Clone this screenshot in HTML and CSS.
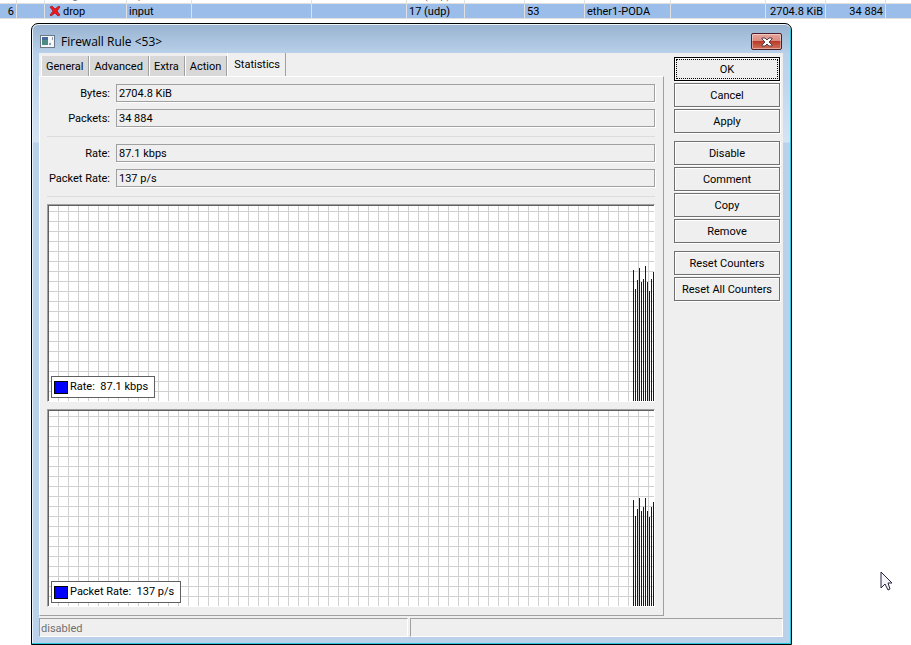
FILE: index.html
```html
<!DOCTYPE html>
<html lang="en">
<head>
  <meta charset="UTF-8" />
  <meta name="viewport" content="width=device-width, initial-scale=1.0"/>
  <title>Firewall Rule</title>
  <link rel="stylesheet" href="styles.css">
</head>
<body>
  <!-- Rule list -->
  <table class="rules">
    <colgroup>
      <col class="col-num"><col class="col-flag"><col class="col-action"><col class="col-chain">
      <col class="col-addr"><col class="col-dst"><col class="col-proto"><col class="col-sport">
      <col class="col-dport"><col class="col-iface"><col class="col-out"><col class="col-bytes">
      <col class="col-packets"><col>
    </colgroup>
    <tr class="previous">
      <td></td><td></td><td><div class="with-icon">log</div></td><td><div>input</div></td><td></td><td></td><td><div>17 (udp)</div></td>
      <td></td><td></td><td></td><td></td><td></td><td></td><td></td>
    </tr>
    <tr class="selected">
      <td class="num">6</td>
      <td></td>
      <td>
        <svg class="drop-icon" width="12" height="12" viewBox="0 0 12 12">
          <path d="M1 2l2-1 3 3 4-3 1 1-3 4 3 4-2 1-3-3-4 3-1-1 3-4z" fill="#f01818" stroke="#a01020" stroke-width="0.7"/>
        </svg>drop
      </td>
      <td>input</td>
      <td></td>
      <td></td>
      <td>17 (udp)</td>
      <td></td>
      <td>53</td>
      <td>ether1-PODA</td>
      <td></td>
      <td class="num">2704.8 KiB</td>
      <td class="num">34 884</td>
      <td></td>
    </tr>
  </table>

  <!-- Rule window -->
  <div class="window">
    <div class="titlebar">
      <svg width="15" height="13" viewBox="0 0 15 13">
        <rect x="0.5" y="0.5" width="14" height="12" fill="#f4f6f8" stroke="#6b7886"/>
        <rect x="2" y="2" width="6" height="8" fill="#4a8c84"/>
        <path d="M2 2h6v3H2z" fill="#48699a"/>
        <path d="M9 8h2v2H9zM12 2h1v3h-1z" fill="#8b9cae"/>
      </svg>
      <span class="title">Firewall Rule &lt;53&gt;</span>
      <button class="close" aria-label="Close">
        <svg width="12" height="10" viewBox="0 0 12 10">
          <path d="M1 1h3l2 2 2-2h3v1L8 5l3 3v1H8L6 7 4 9H1V8l3-3-3-3z" fill="#fff" stroke="#50404c"/>
        </svg>
      </button>
    </div>

    <div class="client">
      <div class="main">
        <div class="left">
          <div class="tabs">
            <button>General</button>
            <button>Advanced</button>
            <button>Extra</button>
            <button>Action</button>
            <button class="active">Statistics</button>
          </div>
          <div class="panel">
            <div class="field"><label for="bytes">Bytes:</label><input id="bytes" value="2704.8 KiB" readonly></div>
            <div class="field"><label for="packets">Packets:</label><input id="packets" value="34 884" readonly></div>
            <hr>
            <div class="field"><label for="rate">Rate:</label><input id="rate" value="87.1 kbps" readonly></div>
            <div class="field"><label for="packet-rate">Packet Rate:</label><input id="packet-rate" value="137 p/s" readonly></div>
            <hr>
            <div class="graph">
              <svg class="bars" width="21" height="135" viewBox="0 0 21 135">
                <path d="M0 4h1v131H0zM2 23h1v112H2zM4 14h1v121H4zM6 2h1v133H6zM8 16h1v119H8zM10 13h1v122h-1zM12 0h1v135h-1zM14 16h1v119h-1zM16 25h1v110h-1zM18 13h1v122h-1zM20 6h1v129h-1z" fill="#0000d8"/>
              </svg>
              <div class="legend"><span class="swatch"></span>Rate:&nbsp; 87.1 kbps</div>
            </div>
            <div class="graph">
              <svg class="bars" width="21" height="108" viewBox="0 0 21 108">
                <path d="M0 2h1v106H0zM2 18h1v90H2zM4 11h1v97H4zM6 0h1v108H6zM8 13h1v95H8zM10 9h1v99h-1zM12 0h1v108h-1zM14 13h1v95h-1zM16 19h1v89h-1zM18 9h1v99h-1zM20 4h1v104h-1z" fill="#0000d8"/>
              </svg>
              <div class="legend"><span class="swatch"></span>Packet Rate:&nbsp; 137 p/s</div>
            </div>
          </div>
        </div>

        <div class="actions">
          <div class="group">
            <button class="default">OK</button>
            <button>Cancel</button>
            <button>Apply</button>
          </div>
          <div class="group">
            <button>Disable</button>
            <button>Comment</button>
            <button>Copy</button>
            <button>Remove</button>
          </div>
          <div class="group">
            <button>Reset Counters</button>
            <button>Reset All Counters</button>
          </div>
        </div>
      </div>

      <div class="status">
        <div>disabled</div>
        <div></div>
      </div>
    </div>
  </div>

  <svg class="cursor" width="13" height="20" viewBox="0 0 13 20">
    <path d="M1 1v16l4-4 3 6 2-1-2-6h4z" fill="#f4f4f8" stroke="#28243c"/>
  </svg>
</body>
</html>
```
FILE: styles.css
```css
* {
  box-sizing: border-box;
}
body {
  margin: 0;
  background: #fff;
  color: #000;
  font: 11px/14px Roboto, "Liberation Sans", Arial, sans-serif;
  overflow: hidden;
}
button,
input {
  font: inherit;
  color: inherit;
}

/* rule list */
.rules {
  width: 100%;
  table-layout: fixed;
  border-spacing: 0;
}
.rules td {
  padding: 0 2px;
  border-right: 1px solid #e0e0e0;
  border-bottom: 1px solid #e0e0e0;
  white-space: nowrap;
  overflow: hidden;
}
.rules td:last-child {
  border-right: 0;
}
.previous td {
  height: 4px;
  color: #777;
}
.previous div {
  display: flex;
  align-items: flex-end;
  height: 3px;
}
.previous .with-icon {
  padding-left: 16px;
}
.rules .selected td {
  height: 15px;
  padding-top: 1px;
  line-height: 13px;
  background: #9bbde9;
}
.rules .num {
  text-align: right;
}
.drop-icon {
  margin: 0 2px 0 2px;
  vertical-align: top;
}
.col-num { width: 17px; }
.col-flag { width: 28px; }
.col-action { width: 82px; }
.col-chain { width: 65px; }
.col-addr { width: 120px; }
.col-dst { width: 95px; }
.col-proto { width: 58px; }
.col-sport { width: 60px; }
.col-dport { width: 60px; }
.col-iface { width: 86px; }
.col-out { width: 95px; }
.col-bytes { width: 60px; }
.col-packets { width: 60px; }

/* window frame */
.window {
  margin: 4px 119px 0 31px;
  padding: 0 8px 7px 7px;
  border: 1px solid #000;
  border-radius: 7px 7px 0 0;
  background: linear-gradient(#98b2d0, #b9d1ea 30px, #c0d6ee 60px, #d5e4f4 118px, #b9d1ea 119px);
  box-shadow: inset 0 1px #f0f6fc, inset -1px -1px #27c8dc, inset 1px 0 #e8f2fa;
}
.titlebar {
  display: flex;
  align-items: center;
  gap: 6px;
  height: 29px;
  padding: 6px 1px 0 1px;
}
.title {
  flex: 1;
  font: 12px/16px "Open Sans", "Noto Sans", sans-serif;
}
.close {
  display: grid;
  place-items: center;
  width: 31px;
  height: 17px;
  padding: 0;
  border: 1px solid #4c1c28;
  border-radius: 2px;
  background: linear-gradient(#e8a59c, #d98a80 48%, #b83c28 50%, #d0725c);
  box-shadow: inset 0 0 0 1px rgba(255, 255, 255, 0.4);
}
.client {
  background: #efefef;
}
.main {
  display: flex;
}
.left {
  flex: 1;
}

/* tabs */
.tabs {
  display: flex;
  align-items: flex-end;
  height: 23px;
  padding-left: 2px;
}
.tabs button {
  height: 20px;
  padding: 2px 5px 0 4px;
  border: 0;
  border-right: 1px solid #a0a0a0;
  border-left: 1px solid #fff;
  background: #d8d8d8;
}
.tabs .active {
  height: 23px;
  padding: 1px 5px 0 6px;
  background: #efefef;
}

/* statistics panel */
.panel {
  padding: 7px 8px 8px 7px;
  border: 1px solid #fff;
  border-right-color: #a0a0a0;
  border-bottom-color: #a0a0a0;
}
.field {
  display: flex;
  align-items: center;
  gap: 6px;
  margin-bottom: 7px;
}
.field label {
  width: 63px;
  padding-top: 2px;
  text-align: right;
  white-space: nowrap;
}
.field input {
  flex: 1;
  min-width: 0;
  height: 18px;
  padding: 1px 2px 0;
  border: 1px solid #a0a0a0;
  background: #efefef;
  box-shadow: 1px 1px #fff;
}
.panel hr {
  margin: 9px 0 7px;
  border: 0;
  border-top: 1px solid #dcdcdc;
}
.graph {
  position: relative;
  height: 198px;
  border: 1px solid #fff;
  border-top-color: #a0a0a0;
  border-left-color: #a0a0a0;
  background: repeating-linear-gradient(90deg, transparent 0 9px, #d0d0d0 9px 10px) 1px 0,
    repeating-linear-gradient(transparent 0 9px, #d0d0d0 9px 10px) 0 -3px, #fff;
  box-shadow: inset 1px 1px #606060;
}
.graph + .graph {
  margin-top: 7px;
}
.bars {
  position: absolute;
  right: 0;
  bottom: 0;
}
.legend {
  position: absolute;
  left: 3px;
  bottom: 3px;
  display: flex;
  align-items: center;
  gap: 2px;
  height: 22px;
  padding: 0 6px 0 2px;
  border: 1px solid #606060;
  background: #fff;
}
.swatch {
  width: 14px;
  height: 13px;
  border: 1px solid #000;
  background: #00f;
}

/* buttons */
.actions {
  width: 119px;
  padding: 4px 3px 0 10px;
}
.group {
  display: grid;
  gap: 2px;
  margin-bottom: 8px;
}
.group button {
  height: 24px;
  padding: 1px 0 0;
  border: 1px solid #707070;
  background: #efefef;
  box-shadow: inset 1px 1px #fff, 1px 1px #fff;
}
.group .default {
  border-color: #000;
  outline: 1px dotted #000;
  outline-offset: -3px;
}

/* status bar */
.status {
  display: grid;
  grid-template-columns: 369px 1fr;
  gap: 2px;
  padding-top: 2px;
}
.status div {
  height: 19px;
  padding: 3px 1px 0;
  border: 1px solid #fff;
  border-top-color: #a0a0a0;
  border-left-color: #a0a0a0;
  color: #707070;
}

.cursor {
  position: absolute;
  left: 880px;
  top: 571px;
}
```
